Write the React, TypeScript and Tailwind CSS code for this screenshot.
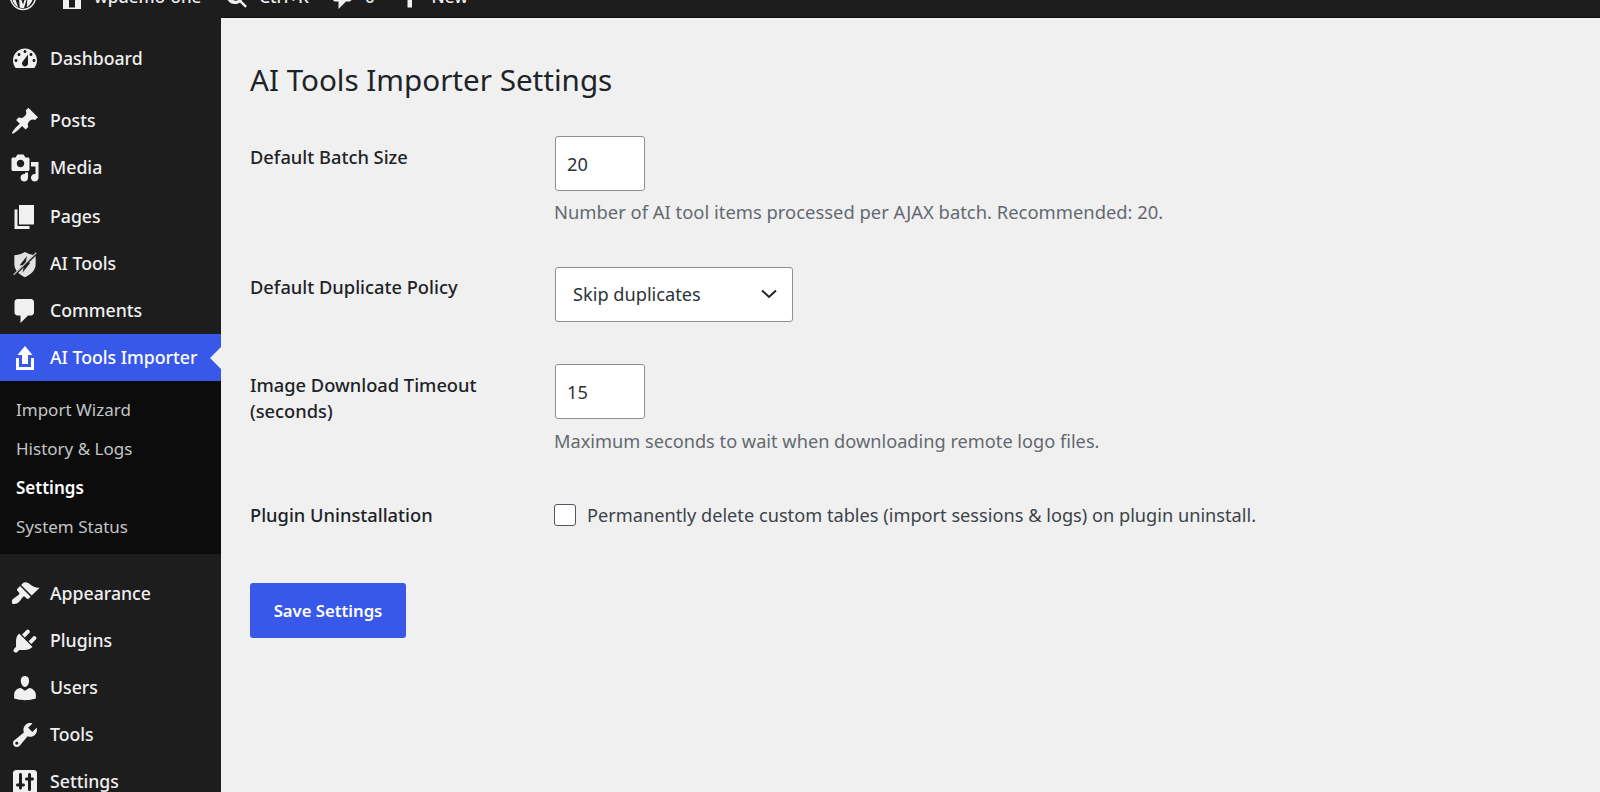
import React from 'react';

const icons: Record<string, string> = {
  dashboard: 'M3.76 16h12.48c1.1-1.37 1.76-3.11 1.76-5 0-4.42-3.58-8-8-8s-8 3.58-8 8c0 1.89.66 3.63 1.76 5zM10 4c.55 0 1 .45 1 1s-.45 1-1 1-1-.45-1-1 .45-1 1-1zM6 6c.55 0 1 .45 1 1s-.45 1-1 1-1-.45-1-1 .45-1 1-1zm8 0c.55 0 1 .45 1 1s-.45 1-1 1-1-.45-1-1 .45-1 1-1zm-5.37 5.55L12 7v6c0 1.1-.9 2-2 2s-2-.9-2-2c0-.57.24-1.08.63-1.45zM4 10c.55 0 1 .45 1 1s-.45 1-1 1-1-.45-1-1 .45-1 1-1zm12 0c.55 0 1 .45 1 1s-.45 1-1 1-1-.45-1-1 .45-1 1-1z',
  posts: 'M10.44 3.02l1.82-1.82 6.36 6.35-1.83 1.82c-1.05-.68-2.48-.57-3.41.36l-.75.75c-.92.93-1.04 2.35-.35 3.41l-1.83 1.82-2.41-2.41-2.8 2.79c-.42.42-3.38 2.71-3.8 2.29s1.86-3.39 2.28-3.81l2.79-2.79L4.1 9.36l1.83-1.82c1.05.69 2.48.57 3.4-.36l.75-.75c.93-.92 1.05-2.35.36-3.41z',
  media: 'M13 11V4c0-.55-.45-1-1-1h-1.67L9 1H5L3.67 3H2c-.55 0-1 .45-1 1v7c0 .55.45 1 1 1h10c.55 0 1-.45 1-1zM7 4.5c1.38 0 2.5 1.12 2.5 2.5S8.38 9.5 7 9.5 4.5 8.38 4.5 7 5.62 4.5 7 4.5zM14 6h5v10.5c0 1.38-1.12 2.5-2.5 2.5S14 17.88 14 16.5s1.12-2.5 2.5-2.5c.17 0 .34.02.5.05V9h-3V6zm-4 8.05V13h2v3.5c0 1.38-1.12 2.5-2.5 2.5S7 17.88 7 16.5 8.12 14 9.5 14c.17 0 .34.02.5.05z',
  pages: 'M6 15V2h10v13H6zm-1 1h8v2H3V5h2v11z',
  comments: 'M5 2h9c1.1 0 2 .9 2 2v7c0 1.1-.9 2-2 2h-2l-5 5v-5H5c-1.1 0-2-.9-2-2V4c0-1.1.9-2 2-2z',
  upload: 'M8 14V8H5l5-6 5 6h-3v6H8zm-2 2v-6H4v8h12.01v-8H14v6H6z',
  appearance: 'M14.48 11.06L7.41 3.99l1.5-1.5c.5-.56 2.3-.47 3.51.32 1.21.8 1.43 1.28 2.91 2.1 1.18.64 2.45 1.26 4.45.85zm-.71.71L6.7 4.7 4.93 6.47c-.39.39-.39 1.02 0 1.41l1.06 1.06c.39.39.39 1.03 0 1.42-.6.6-1.43 1.11-2.21 1.69-.35.26-.7.53-1.01.84C1.43 13.23.91 14.75 1.5 16.5c1.75.59 3.27.07 4.61-1.27.31-.31.58-.66.84-1.01.58-.78 1.09-1.61 1.69-2.21.39-.39 1.02-.39 1.41 0l1.06 1.06c.39.39 1.02.39 1.41 0z',
  plugins: 'M13.11 4.36L9.87 7.6 8 5.73l3.24-3.24c.35-.34 1.05-.2 1.56.32.52.51.66 1.21.31 1.55zm-8 1.77l.91-1.12 9.01 9.01-1.19.84c-.71.71-2.63 1.16-3.82 1.16H6.14L4.9 17.26c-.59.59-1.54.59-2.12 0-.59-.58-.59-1.53 0-2.12l1.24-1.24v-3.88c0-1.13.4-3.19 1.09-3.89zm7.26 3.97l3.24-3.24c.34-.35 1.04-.21 1.55.31.52.51.66 1.21.31 1.55l-3.24 3.25z',
  users: 'M10 9.25c-2.27 0-2.73-3.44-2.73-3.44C7 4.02 7.82 2 9.97 2c2.16 0 2.98 2.02 2.71 3.81 0 0-.41 3.44-2.68 3.44zm0 2.57L12.72 10c2.39 0 4.52 2.33 4.52 4.53v2.49s-3.65 1.13-7.24 1.13c-3.65 0-7.24-1.13-7.24-1.13v-2.49c0-2.25 1.94-4.48 4.47-4.48z',
  tools: 'M16.68 9.77c-1.34 1.34-3.3 1.67-4.95.99l-5.41 6.52c-.99.99-2.59.99-3.58 0s-.99-2.59 0-3.57l6.52-5.42c-.68-1.65-.35-3.61.99-4.95 1.28-1.28 3.12-1.62 4.72-1.06l-2.89 2.89 2.82 2.82 2.86-2.87c.53 1.58.18 3.39-1.08 4.65zM3.81 16.21c.4.39 1.04.39 1.43 0 .4-.4.4-1.04 0-1.43-.39-.4-1.03-.4-1.43 0-.39.39-.39 1.03 0 1.43z',
  settings: 'M18 16V4c0-1.1-.9-2-2-2H4c-1.1 0-2 .9-2 2v12c0 1.1.9 2 2 2h12c1.1 0 2-.9 2-2zM8 11h1c.55 0 1 .45 1 1s-.45 1-1 1H8v1c0 .55-.45 1-1 1s-1-.45-1-1v-1H5c-.55 0-1-.45-1-1s.45-1 1-1h1V5c0-.55.45-1 1-1s1 .45 1 1v6zm7-2h-1v6c0 .55-.45 1-1 1s-1-.45-1-1V9h-1c-.55 0-1-.45-1-1s.45-1 1-1h1V5c0-.55.45-1 1-1s1 .45 1 1v2h1c.55 0 1 .45 1 1s-.45 1-1 1z',
  home: 'M16 8.5l1.53 1.53-1.06 1.06L10 4.62l-6.47 6.47-1.06-1.06L10 2.5l4 4v-2h2v4zm-6-2.46l6 5.99V18H4v-5.97zM12 17v-5H8v5h4z',
  search: 'M12.14 4.78c1.95 1.95 1.95 5.12 0 7.07-1.95 1.95-5.12 1.95-7.07 0-1.95-1.95-1.95-5.12 0-7.07 1.95-1.95 5.12-1.95 7.07 0zm1.2 8.55l4.24 4.24-1.41 1.41-4.24-4.24c-3.1 2.2-7.4 1.6-9.6-1.5S.7 5.3 3.8 3.1s7.4-1.6 9.6 1.5c1.7 2.4 1.7 6.3-.06 8.73z',
  plus: 'M17 7v3h-5v5H9v-5H4V7h5V2h3v5h5z',
};

function Icon({ name, className = 'h-[30px] w-[30px]' }: { name: string; className?: string }) {
  return (
    <svg viewBox="0 0 20 20" fill="currentColor" className={className}>
      <path fillRule="evenodd" d={icons[name]} />
    </svg>
  );
}

function WpLogo() {
  return (
    <svg viewBox="0 0 20 20" className="h-[30px] w-[30px]" fill="currentColor">
      <circle cx="10" cy="10" r="8.300" fill="none" stroke="currentColor" strokeWidth="1" />
      <path d="M3.200 7 L6.800 16.800 Q4.500 15.700 3.300 13 Q2.500 10 3.200 7Z" />
      <path d="M7 6.500 L10 15 L12.400 8 L13.500 8 L10.700 17.300 Q9.200 17.500 7.800 17 Z" />
      <path d="M13.300 6.500 L16 7 Q17 10.500 15.800 13.200 Q14.800 15.500 12.500 16.800 Z" />
    </svg>
  );
}

// shield with a bolt through it, this one is not a dashicon
function ShieldIcon() {
  return (
    <svg viewBox="0 0 24 24" className="h-[32px] w-[32px]">
      <path fill="#e2e2e2" d="M4 5.500 C8 5 10 4 12 3 C14 4 16 5 20 5.500 V12 C20 17 16 20 12 22 C8 20 4 17 4 12 Z" />
      <path fill="#1d1d1d" d="M13.500 6 L8 13 H11.500 L10 18.500 L16 11 H12.500 Z" />
      <path stroke="#1d1d1d" strokeWidth="1.400" d="M4 20.500 L20.500 4.500" />
      <path stroke="#bbbbbb" strokeWidth="1" d="M3.500 20 L20.500 3.500" />
    </svg>
  );
}

function MenuItem({ icon, label, active, className = '' }: { icon?: string; label: string; active?: boolean; className?: string }) {
  return (
    <div className={`relative flex h-[47px] items-center text-[17.700px] font-medium ${active ? 'bg-[#3858e9] text-white' : 'text-[#f0f0f1]'} ${className}`}>
      <span className="flex w-[50px] justify-center">
        {icon ? <Icon name={icon} /> : <ShieldIcon />}
      </span>
      <span>{label}</span>
      {active && (
        <span className="absolute right-0 top-1/2 h-0 w-0 -translate-y-1/2 border-y-[11px] border-r-[11px] border-y-transparent border-r-[#f0f0f0]" />
      )}
    </div>
  );
}

function SubItem({ label, current }: { label: string; current?: boolean }) {
  return (
    <div className={`flex h-[39px] items-center pl-[16px] text-[17px] ${current ? 'font-semibold text-white' : 'text-[#c3c4c7]'}`}>
      {label}
    </div>
  );
}

function TopBar() {
  return (
    <div className="h-[17px] shrink-0 overflow-hidden bg-[#1d1d1d]">
      <div className="-mt-[25px] flex h-[43px] items-center text-[17px] font-medium text-[#f0f0f1]">
        <span className="ml-[8px]"><WpLogo /></span>
        <span className="ml-[19px]"><Icon name="home" /></span>
        <span className="ml-[7px]">wpdemo-one</span>
        <span className="ml-[24px]"><Icon name="search" className="h-[25px] w-[25px]" /></span>
        <span className="ml-[9px]">Ctrl+K</span>
        <span className="ml-[19px]"><Icon name="comments" /></span>
        <span className="ml-[7px]">0</span>
        <span className="ml-[19px] mt-[6px]"><Icon name="plus" /></span>
        <span className="ml-[8px]">New</span>
      </div>
    </div>
  );
}

function Sidebar() {
  return (
    <aside className="w-[221px] shrink-0 bg-[#1d1d1d] pt-[18px]">
      <MenuItem icon="dashboard" label="Dashboard" />
      <div className="mt-[15px]">
        <MenuItem icon="posts" label="Posts" />
        <MenuItem icon="media" label="Media" />
        <MenuItem icon="pages" label="Pages" className="mt-[2px]" />
        <MenuItem label="AI Tools" />
        <MenuItem icon="comments" label="Comments" />
        <MenuItem icon="upload" label="AI Tools Importer" active />
      </div>
      <div className="bg-[#0c0c0c] pb-[7.500px] pt-[9.500px]">
        <SubItem label="Import Wizard" />
        <SubItem label="History & Logs" />
        <SubItem label="Settings" current />
        <SubItem label="System Status" />
      </div>
      <div className="mt-[16px]">
        <MenuItem icon="appearance" label="Appearance" />
        <MenuItem icon="plugins" label="Plugins" />
        <MenuItem icon="users" label="Users" />
        <MenuItem icon="tools" label="Tools" />
        <MenuItem icon="settings" label="Settings" />
      </div>
    </aside>
  );
}

const fieldClass = 'h-[55px] rounded-[3px] border border-[#8c8f94] bg-white text-[18.200px] text-[#2c3338] outline-none';
const labelClass = 'text-[18.300px] font-medium leading-[26px]';

export default function App() {
  return (
    <div className="flex h-[792px] flex-col overflow-hidden bg-[#f0f0f0] font-['Noto_Sans','Open_Sans',sans-serif]">
      <TopBar />
      <div className="flex min-h-0 flex-1">
        <Sidebar />
        <main className="flex-1 border-t border-[#101010] pl-[29px] text-[#1d2327]">
          <h1 className="mt-[41px] h-[42px] text-[29.600px] leading-[42px]">AI Tools Importer Settings</h1>

          <div className="mt-[35px] grid grid-cols-[305px_1fr]">
            <label className={`pt-[8px] ${labelClass}`}>Default Batch Size</label>
            <div>
              <input type="text" defaultValue="20" className={`${fieldClass} w-[90px] px-[11px]`} />
              <p className="-ml-[1px] mt-[7px] h-[28px] text-[18.400px] leading-[28px] text-[#646970]">
                Number of AI tool items processed per AJAX batch. Recommended: 20.
              </p>
            </div>

            <label className={`mt-[41px] pt-[7px] ${labelClass}`}>Default Duplicate Policy</label>
            <div className="relative mt-[41px] w-[238px]">
              <select defaultValue="skip" className={`${fieldClass} w-full appearance-none pl-[17px]`}>
                <option value="skip">Skip duplicates</option>
              </select>
              <svg viewBox="0 0 16 10" className="pointer-events-none absolute right-[16px] top-[22px] h-[10px] w-[16px]" fill="none" stroke="#1d2327" strokeWidth="2">
                <path d="M1 1.500 L8 8 L15 1.500" />
              </svg>
            </div>

            <label className={`mt-[42px] pt-[8px] ${labelClass}`}>
              Image Download Timeout<br />(seconds)
            </label>
            <div className="mt-[42px]">
              <input type="text" defaultValue="15" className={`${fieldClass} w-[90px] px-[11px]`} />
              <p className="-ml-[1px] mt-[8px] h-[28px] text-[18.200px] leading-[28px] text-[#646970]">
                Maximum seconds to wait when downloading remote logo files.
              </p>
            </div>

            <label className={`mt-[47px] ${labelClass}`}>Plugin Uninstallation</label>
            <div className="mt-[47px] flex items-center gap-[11px] -ml-[1px]">
              <input type="checkbox" className="h-[22px] w-[22px] appearance-none rounded-[3px] border border-[#50575e] bg-white" />
              <span className="text-[18.200px] leading-[26px] text-[#3c434a]">
                Permanently delete custom tables (import sessions & logs) on plugin uninstall.
              </span>
            </div>
          </div>

          <button className="mt-[55px] h-[55px] w-[156px] rounded-[3px] bg-[#3858e9] text-[16.700px] font-semibold text-white">
            Save Settings
          </button>
        </main>
      </div>
    </div>
  );
}
